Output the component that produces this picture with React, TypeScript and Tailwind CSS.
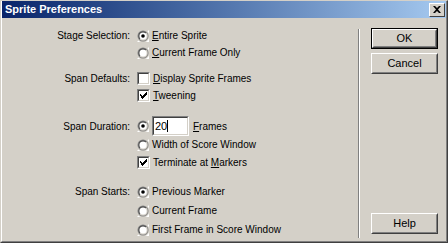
import React from "react";

const font = { fontFamily: '"Liberation Sans", Arial, sans-serif' };

function Radio({ checked }: { checked?: boolean }) {
  return (
    <svg width="12" height="12" viewBox="0 0 12 12" className="shrink-0">
      <path d="M11 2 A5.5 5.5 0 0 0 2 11" fill="none" stroke="#ffffff" strokeWidth="0" />
      <circle cx="6" cy="6" r="5.5" fill="#808080" />
      <path d="M1.5 10.5 A5.5 5.5 0 0 0 10.5 1.5 L 12 0 L 12 12 L 0 12 Z" fill="#ffffff" />
      <circle cx="6" cy="6" r="5.5" fill="none" stroke="#d4d0c8" strokeWidth="0" />
      <circle cx="6" cy="6" r="4.5" fill="#404040" />
      <path d="M2.6 9.4 A4.5 4.5 0 0 0 9.4 2.6 Z" fill="#d4d0c8" />
      <circle cx="6" cy="6" r="3.6" fill="#ffffff" />
      {checked && <circle cx="6" cy="6" r="1.8" fill="#000000" />}
    </svg>
  );
}

function Check({ checked }: { checked?: boolean }) {
  return (
    <div className="w-[13px] h-[13px] shrink-0 border border-t-[#808080] border-l-[#808080] border-b-white border-r-white">
      <div className="w-full h-full border border-t-[#404040] border-l-[#404040] border-b-[#d4d0c8] border-r-[#d4d0c8] bg-white flex items-center justify-center">
        {checked && (
          <svg width="7" height="7" viewBox="0 0 7 7">
            <path d="M0 2h1v1h1v1h1V3h1V2h1V1h1V0h1v3h-1v1h-1v1h-1v1h-1v1h-1V6h-1V5H1V4H0z" fill="#000" />
          </svg>
        )}
      </div>
    </div>
  );
}

function Btn({ children, def }: { children: React.ReactNode; def?: boolean }) {
  const inner = (
    <div className="w-full h-full border border-t-white border-l-white border-b-[#404040] border-r-[#404040]">
      <div className="w-full h-full border border-t-[#d4d0c8] border-l-[#d4d0c8] border-b-[#808080] border-r-[#808080] flex items-center justify-center text-[11px] text-black">
        {children}
      </div>
    </div>
  );
  return def ? (
    <div className="w-[67px] h-[21px] border border-black">{inner}</div>
  ) : (
    <div className="w-[67px] h-[21px]">{inner}</div>
  );
}

function Row({
  label,
  h,
  children,
}: {
  label?: string;
  h: string;
  children: React.ReactNode;
}) {
  return (
    <div className={`flex items-center ${h}`}>
      <div className="w-[129px] text-right pr-[1px] whitespace-nowrap">{label}</div>
      <div className="ml-[6px] flex items-center gap-[3px] whitespace-nowrap">{children}</div>
    </div>
  );
}

export default function App() {
  return (
    <div
      className="w-[448px] h-[243px] bg-[#d4d0c8] border border-t-[#d4d0c8] border-l-[#d4d0c8] border-b-[#404040] border-r-[#404040] text-[10px] text-black overflow-hidden"
      style={font}
    >
      <div className="w-full h-full border-l border-b border-r border-l-white border-b-[#808080] border-r-[#808080] flex flex-col">
        <div className="h-[17px] shrink-0 bg-gradient-to-r from-[#0a246a] to-[#a6caf0] flex items-center justify-between pl-[3px] pr-[1px]">
          <span className="text-white font-bold text-[11px] leading-none">Sprite Preferences</span>
          <div className="w-[16px] h-[14px] bg-[#d4d0c8] border border-t-white border-l-white border-b-[#404040] border-r-[#404040] flex items-center justify-center">
            <svg width="8" height="7" viewBox="0 0 8 7">
              <path d="M0 0h2l2 2 2-2h2L5 3.5 8 7H6L4 5 2 7H0l3-3.5z" fill="#000" />
            </svg>
          </div>
        </div>
        <div className="flex flex-1">
          <div className="w-[356px] flex flex-col pt-[9px]">
            <Row label="Stage Selection:" h="h-[17px]">
              <Radio checked />
              <span>
                <span className="underline">E</span>ntire Sprite
              </span>
            </Row>
            <Row h="h-[17px]">
              <Radio />
              <span>
                <span className="underline">C</span>urrent Frame Only
              </span>
            </Row>
            <div className="h-[9px]" />
            <Row label="Span Defaults:" h="h-[17px]">
              <Check />
              <span>
                <span className="underline">D</span>isplay Sprite Frames
              </span>
            </Row>
            <Row h="h-[17px]">
              <Check checked />
              <span>
                <span className="underline">T</span>weening
              </span>
            </Row>
            <div className="h-[12px]" />
            <Row label="Span Duration:" h="h-[20px]">
              <Radio checked />
              <div className="w-[37px] h-[20px] border border-t-[#808080] border-l-[#808080] border-b-white border-r-white">
                <div className="w-full h-full border border-t-[#404040] border-l-[#404040] border-b-[#d4d0c8] border-r-[#d4d0c8] bg-white flex items-center pl-[1px] text-[11px]">
                  20<span className="inline-block w-[1px] h-[12px] bg-black" />
                </div>
              </div>
              <span className="ml-[1px]">
                <span className="underline">F</span>rames
              </span>
            </Row>
            <Row h="h-[17px]">
              <Radio />
              <span>Width of Score Window</span>
            </Row>
            <Row h="h-[18px]">
              <Check checked />
              <span>
                Terminate at <span className="underline">M</span>arkers
              </span>
            </Row>
            <div className="h-[11px]" />
            <Row label="Span Starts:" h="h-[19px]">
              <Radio checked />
              <span>Previous Marker</span>
            </Row>
            <Row h="h-[19px]">
              <Radio />
              <span>Current Frame</span>
            </Row>
            <Row h="h-[19px]">
              <Radio />
              <span>First Frame in Score Window</span>
            </Row>
          </div>
          <div className="mt-[11px] mb-[3px] w-[2px] flex">
            <div className="w-[1px] bg-[#808080]" />
            <div className="w-[1px] bg-white" />
          </div>
          <div className="flex-1 flex flex-col pl-[11px] pt-[10px] pb-[7px]">
            <Btn def>OK</Btn>
            <div className="h-[4px]" />
            <Btn>Cancel</Btn>
            <div className="flex-1" />
            <Btn>Help</Btn>
          </div>
        </div>
      </div>
    </div>
  );
}
